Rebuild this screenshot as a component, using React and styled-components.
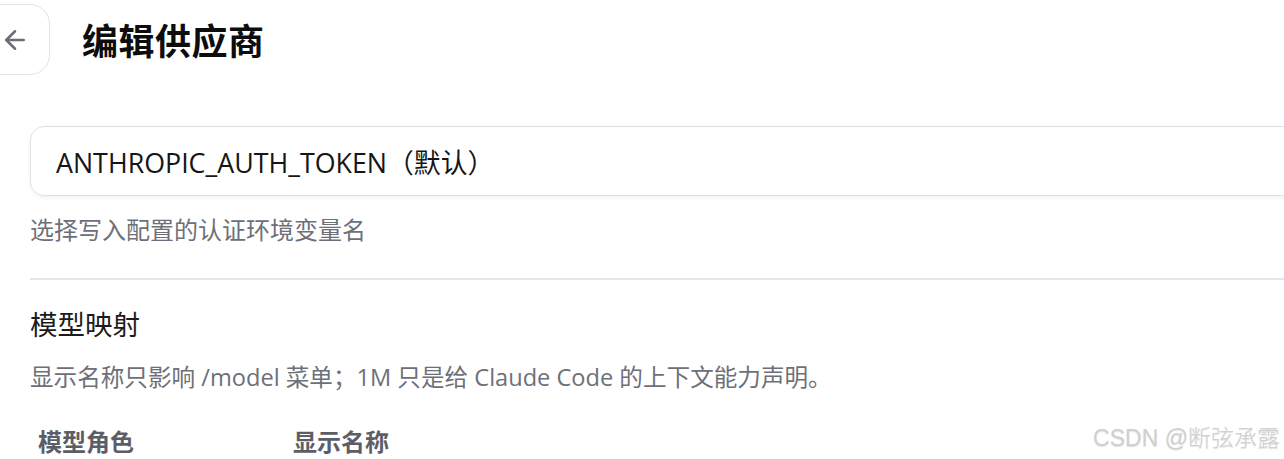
import React from 'react';
import styled, { createGlobalStyle } from 'styled-components';
import { ArrowLeft } from 'lucide-react';

const GlobalStyle = createGlobalStyle`
  html, body {
    margin: 0;
    padding: 0;
    background: #ffffff;
    overflow: hidden;
  }
  body {
    font-family: "Open Sans", "Noto Sans CJK SC", sans-serif;
    color: #1a1a1a;
  }
`;

const Page = styled.div`
  position: relative;
  width: 1284px;
  height: 459px;
  overflow: hidden;
`;

const Content = styled.div`
  width: 1320px;
  padding-left: 30px;
  display: flex;
  flex-direction: column;
`;

const Header = styled.div`
  display: flex;
  align-items: center;
  gap: 32px;
  margin-top: 4px;
  margin-left: -51px;
`;

const BackButton = styled.button`
  width: 71px;
  height: 71px;
  border: 1.5px solid #e2e2e4;
  border-radius: 20px;
  background: #ffffff;
  display: flex;
  align-items: center;
  justify-content: center;
  color: #6b6e76;
  padding: 0;
  cursor: pointer;
`;

const Title = styled.h1`
  margin: 0;
  font-size: 36px;
  font-weight: 700;
  color: #0d0d0d;
  letter-spacing: 0.5px;
`;

const SelectBox = styled.div`
  margin-top: 51px;
  height: 70px;
  box-sizing: border-box;
  border: 1.5px solid #e1e1e3;
  border-radius: 14px;
  box-shadow: 0 2px 4px rgba(0, 0, 0, 0.05);
  display: flex;
  align-items: center;
  padding-left: 25px;
  font-size: 26.8px;
  color: #161616;
`;

const Hint = styled.p`
  margin: ${(p) => p.$top || 0}px 0 0;
  font-size: ${(p) => p.$size || 24}px;
  line-height: 32px;
  color: #6d7079;
`;

const Divider = styled.hr`
  margin: 32px 0 0;
  border: none;
  height: 2px;
  background: #e6e6e8;
`;

const SectionTitle = styled.h2`
  margin: 27px 0 0;
  font-size: 27.5px;
  line-height: 36px;
  font-weight: 400;
  color: #1c1c1c;
`;

const TableHead = styled.div`
  margin-top: 33px;
  display: grid;
  grid-template-columns: 255px 1fr;
  padding-left: 8px;
  font-size: 24px;
  line-height: 32px;
  font-weight: 700;
  color: #5b5e66;
`;

const Watermark = styled.div`
  position: absolute;
  right: 4px;
  bottom: 6px;
  font-family: "Liberation Sans", "Noto Sans CJK SC", sans-serif;
  font-size: 23px;
  font-weight: 300;
  color: #d0d0d0;
  text-shadow: 0 1px 1px rgba(0, 0, 0, 0.12);
  white-space: nowrap;
`;

const App = () => {
  return (
    <>
      <GlobalStyle />
      <Page>
        <Content>
          <Header>
            <BackButton aria-label="返回">
              <ArrowLeft size={30} strokeWidth={2} />
            </BackButton>
            <Title>编辑供应商</Title>
          </Header>
          <SelectBox>ANTHROPIC_AUTH_TOKEN（默认）</SelectBox>
          <Hint $top={18}>选择写入配置的认证环境变量名</Hint>
          <Divider />
          <SectionTitle>模型映射</SectionTitle>
          <Hint $top={18} $size={23.6}>显示名称只影响 /model 菜单；1M 只是给 Claude Code 的上下文能力声明。</Hint>
          <TableHead>
            <span>模型角色</span>
            <span>显示名称</span>
          </TableHead>
        </Content>
        <Watermark>CSDN @断弦承露</Watermark>
      </Page>
    </>
  );
};

export default App;
